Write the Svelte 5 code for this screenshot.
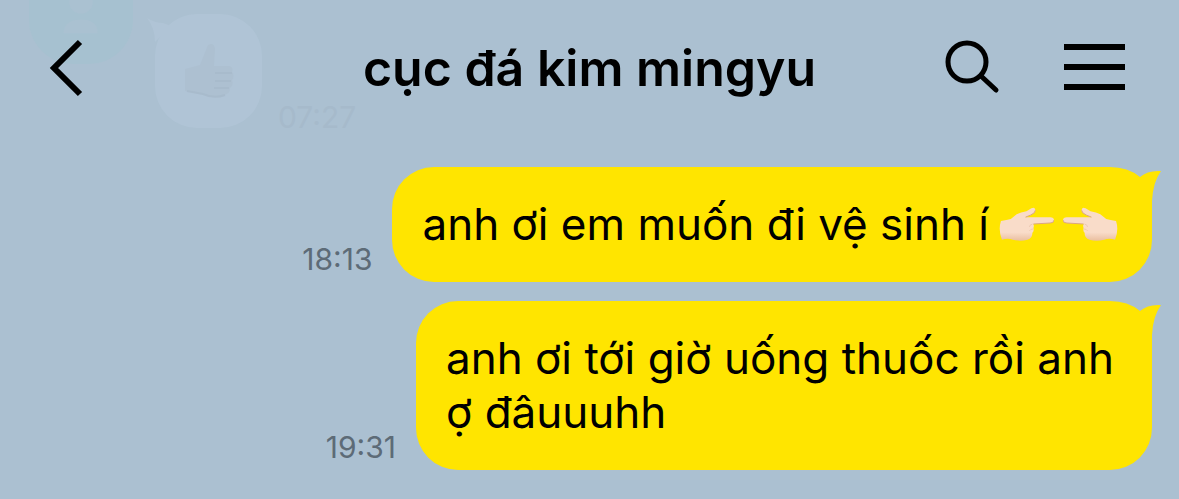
<script lang="ts">
	const title = 'cục đá kim mingyu';

	const messages = [
		{ id: 1, time: '18:13', text: 'anh ơi em muốn đi vệ sinh í', hands: true },
		{ id: 2, time: '19:31', text: 'anh ơi tới giờ uống thuốc rồi anh ợ đâuuuhh', hands: false }
	];
</script>

{#snippet hand(flipped: boolean)}
	<svg class="hand" viewBox="0 0 56 36" aria-hidden="true">
		<defs>
			<linearGradient id="skin" x1="0" y1="0" x2="0" y2="1">
				<stop offset="0" stop-color="#f9dcc9" />
				<stop offset="0.75" stop-color="#f9dcc9" />
				<stop offset="1" stop-color="#eabfa0" />
			</linearGradient>
		</defs>
		<g transform={flipped ? 'translate(56 0) scale(-1 1)' : undefined}>
			<path
				d="M2 15Q8 14 12 13L18 8Q22 6 28 5L33 2Q37 0 37 4Q37 7 32 9L27 11H52Q56 11 56 14Q56 17 52 17L35 18Q36 20 35 22Q36 25 34 27Q34 33 29 34Q22 36 14 34Q9 32 3 34Q-1 24 2 15Z"
				fill="url(#skin)"
			/>
			<path d="M35 18L52 17Q56 17 56 14M27 11L32 9Q37 7 37 4" fill="none" stroke="#dba583" stroke-width="1" />
			<path d="M34 18Q31 19 31 21M35 23Q32 23 31 25" fill="none" stroke="#edc8b0" stroke-width="1" />
		</g>
	</svg>
{/snippet}

<main class="chat">
	<div class="faded">
		<div class="avatar">
			<svg viewBox="0 0 106 66" aria-hidden="true">
				<circle cx="53" cy="2" r="12" />
				<path d="M35 34Q36 20 53 20T70 34Z" />
			</svg>
		</div>
		<div class="received">
			<svg class="received-tail" viewBox="0 0 24 24" aria-hidden="true">
				<path d="M0 0Q8 5 16 5L24 8L8 24Q8 10 0 0Z" />
			</svg>
			<svg class="thumb" viewBox="0 0 52 56" aria-hidden="true">
				<path d="M2 26L17 22L25 2Q31-1 32 6L31 23H46Q51 24 49 29Q52 33 49 37Q51 42 47 45Q47 51 41 52Q31 55 20 51L2 48Z" />
				<path d="M32 30H49M32 38H48M31 45H46M4 48L20 51Q31 56 42 52" class="crease" />
			</svg>
		</div>
		<time class="received-time">07:27</time>
	</div>

	<header>
		<div class="side">
			<button aria-label="Back">
				<svg width="36" height="58" viewBox="0 0 36 58" aria-hidden="true">
					<path d="M32 3L6 29L32 55" fill="none" stroke="#000" stroke-width="6" />
				</svg>
			</button>
		</div>
		<h1>{title}</h1>
		<div class="side actions">
			<button aria-label="Search">
				<svg width="56" height="56" viewBox="0 0 56 56" aria-hidden="true">
					<g fill="none" stroke="#000" stroke-width="5">
						<circle cx="22" cy="22" r="19" />
						<path d="M36 36L51 50" stroke-linecap="round" />
					</g>
				</svg>
			</button>
			<button aria-label="Menu">
				<svg width="62" height="48" viewBox="0 0 62 48" aria-hidden="true">
					<path d="M1 3H62M1 23H62M1 43H62" stroke="#000" stroke-width="6" />
				</svg>
			</button>
		</div>
	</header>

	<section class="messages">
		{#each messages as message (message.id)}
			<div class="message">
				<time>{message.time}</time>
				<div class="bubble">
					<p>{message.text}</p>
					{#if message.hands}
						<span class="hands" role="img" aria-label="👉🏻👈🏻">
							{@render hand(false)}
							{@render hand(true)}
						</span>
					{/if}
					<svg class="tail" viewBox="0 0 52 44" aria-hidden="true">
						<path d="M0 0Q18 0 30 10Q38 3 51 4Q43 15 42 34V44H0Z" fill="#ffe500" />
					</svg>
				</div>
			</div>
		{/each}
	</section>
</main>

<style>
	:global(body) {
		margin: 0;
		background: #abc0d1;
	}

	.chat {
		position: relative;
		overflow: hidden;
		min-height: 100vh;
		font-family: Inter, 'Noto Sans', sans-serif;
		color: #000;
	}

	header {
		position: relative;
		display: grid;
		grid-template-columns: 1fr auto 1fr;
		align-items: center;
		height: 136px;
		padding: 0 48px;
	}

	h1 {
		margin: 0;
		font-size: 50px;
		font-weight: 600;
		line-height: 60px;
	}

	.side {
		display: flex;
		align-items: center;
	}

	.actions {
		justify-content: flex-end;
		gap: 62px;
		padding-right: 6px;
	}

	button {
		padding: 0;
		border: 0;
		background: none;
		cursor: pointer;
	}

	button svg {
		display: block;
	}

	.messages {
		display: flex;
		flex-direction: column;
		gap: 19px;
		padding: 31px 27px 29px 20px;
	}

	.message {
		display: flex;
		justify-content: flex-end;
		align-items: flex-end;
		gap: 20px;
	}

	time {
		padding-bottom: 4px;
		font-size: 30px;
		line-height: 38px;
		color: #5d6b77;
	}

	.bubble {
		position: relative;
		display: flex;
		align-items: center;
		gap: 10px;
		max-width: 676px;
		padding: 30px 30px 31px;
		border-radius: 42px 0 42px 42px;
		background: linear-gradient(#ffe500, #ffe500) left / calc(100% - 42px) 100% no-repeat,
			linear-gradient(#ffe500, #ffe500) right bottom / 42px calc(100% - 43px) no-repeat;
	}

	.bubble:has(.hands) {
		max-width: none;
		padding-right: 34px;
	}

	p {
		margin: 0;
		font-size: 44px;
		line-height: 54px;
	}

	.hands {
		display: flex;
		gap: 9px;
	}

	.hand {
		width: 55px;
		height: 36px;
	}

	.tail {
		position: absolute;
		top: 0;
		right: -10px;
		width: 52px;
		height: 44px;
	}

	.faded {
		position: absolute;
		top: 0;
		left: 29px;
		display: flex;
		align-items: flex-end;
	}

	.avatar {
		align-self: flex-start;
		width: 104px;
		height: 64px;
		border-radius: 0 0 44px 44px;
		background: #a6c1d0;
	}

	.avatar svg {
		display: block;
		fill: #aac1d1;
	}

	.received {
		position: relative;
		display: grid;
		place-items: center;
		width: 107px;
		height: 114px;
		margin: 14px 16px 0 22px;
		border-radius: 42px;
		background: #b0c4d6;
	}

	.received-tail {
		position: absolute;
		top: 4px;
		left: -8px;
		width: 24px;
		height: 24px;
		fill: #b0c4d6;
	}

	.thumb {
		width: 52px;
		height: 56px;
		fill: #adc0d1;
	}

	.crease {
		fill: none;
		stroke: #a8bbcc;
		stroke-width: 2;
	}

	.received-time {
		padding: 0;
		margin-bottom: -8px;
		color: #a6bacb;
	}
</style>
